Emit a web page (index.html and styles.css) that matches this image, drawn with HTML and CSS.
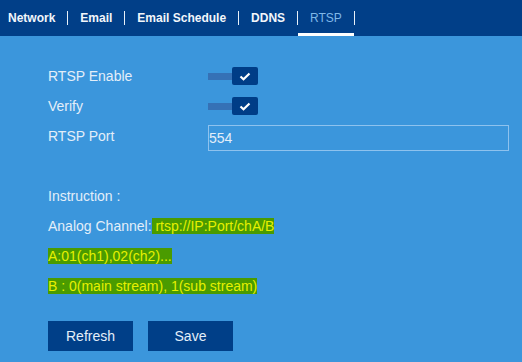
FILE: index.html
```html
<!DOCTYPE html>
<html lang="en">
<head>
    <meta charset="UTF-8">
    <title>RTSP</title>
    <link rel="stylesheet" href="styles.css">
</head>
<body>
    <header class="tabs">
        <a class="tab first">Network</a>
        <span class="sep"></span>
        <a class="tab">Email</a>
        <span class="sep"></span>
        <a class="tab">Email Schedule</a>
        <span class="sep"></span>
        <a class="tab">DDNS</a>
        <span class="sep"></span>
        <a class="tab active">RTSP</a>
        <span class="sep"></span>
    </header>

    <main class="content">
        <div class="form-row">
            <label>RTSP Enable</label>
            <div class="switch">
                <span class="track"></span>
                <span class="knob">
                    <svg width="12" height="9" viewBox="0 0 12 9"><path d="M1.5 4.5 L4.5 7.2 L10.5 1.5" fill="none" stroke="#fff" stroke-width="2.2"/></svg>
                </span>
            </div>
        </div>
        <div class="form-row">
            <label>Verify</label>
            <div class="switch">
                <span class="track"></span>
                <span class="knob">
                    <svg width="12" height="9" viewBox="0 0 12 9"><path d="M1.5 4.5 L4.5 7.2 L10.5 1.5" fill="none" stroke="#fff" stroke-width="2.2"/></svg>
                </span>
            </div>
        </div>
        <div class="form-row">
            <label>RTSP Port</label>
            <input type="text" class="port-input" value="554">
        </div>

        <div class="instruction">
            <p>Instruction :</p>
            <p>Analog Channel:<span class="mark"> rtsp://IP:Port/chA/B </span></p>
            <p><span class="mark">A:01(ch1),02(ch2)...</span></p>
            <p><span class="mark">B : 0(main stream), 1(sub stream)</span></p>
        </div>

        <div class="actions">
            <button class="btn">Refresh</button>
            <button class="btn">Save</button>
        </div>
    </main>
</body>
</html>
```

FILE: styles.css
```css
* {
    margin: 0;
    padding: 0;
    box-sizing: border-box;
}

body {
    font-family: "Liberation Sans", Arial, sans-serif;
    background-color: #3b96dc;
    color: #e3eef9;
    font-size: 14px;
    min-height: 100vh;
}

.tabs {
    height: 36px;
    display: flex;
    align-items: stretch;
    background-color: #013f88;
}

.tab {
    display: flex;
    align-items: center;
    padding: 3px 12px 0;
    border-bottom: 3px solid transparent;
    color: #f2f6fb;
    font-size: 12px;
    font-weight: bold;
}

.tab.first {
    padding-left: 8px;
}

.tab.active {
    color: #80b8e8;
    font-weight: normal;
    border-bottom-color: #ffffff;
}

.sep {
    width: 1px;
    height: 14px;
    align-self: center;
    background-color: #e8f0f8;
}

.content {
    padding: 25px 0 0 48px;
}

.form-row {
    height: 30px;
    display: flex;
    align-items: center;
}

.form-row label {
    width: 160px;
}

.switch {
    display: flex;
    align-items: center;
}

.track {
    width: 24px;
    height: 7px;
    background-color: #3571b6;
}

.knob {
    width: 26px;
    height: 18px;
    display: flex;
    align-items: center;
    justify-content: center;
    background-color: #003d87;
    border-radius: 2px;
}

.port-input {
    width: 301px;
    height: 26px;
    margin-top: 4px;
    border: 1px solid #8ec2ee;
    background: transparent;
    color: #e3eef9;
    font-family: "Liberation Sans", Arial, sans-serif;
    font-size: 14px;
    padding: 0;
    outline: none;
}

.instruction {
    margin-top: 30px;
}

.instruction p {
    height: 30px;
    line-height: 30px;
}

.mark {
    background-color: #4a9b00;
    color: #e6f000;
}

.actions {
    margin-top: 20px;
    display: flex;
    gap: 15px;
}

.btn {
    width: 85px;
    height: 30px;
    border: none;
    background-color: #003f88;
    color: #e3eef9;
    font-family: "Liberation Sans", Arial, sans-serif;
    font-size: 14px;
}
```
